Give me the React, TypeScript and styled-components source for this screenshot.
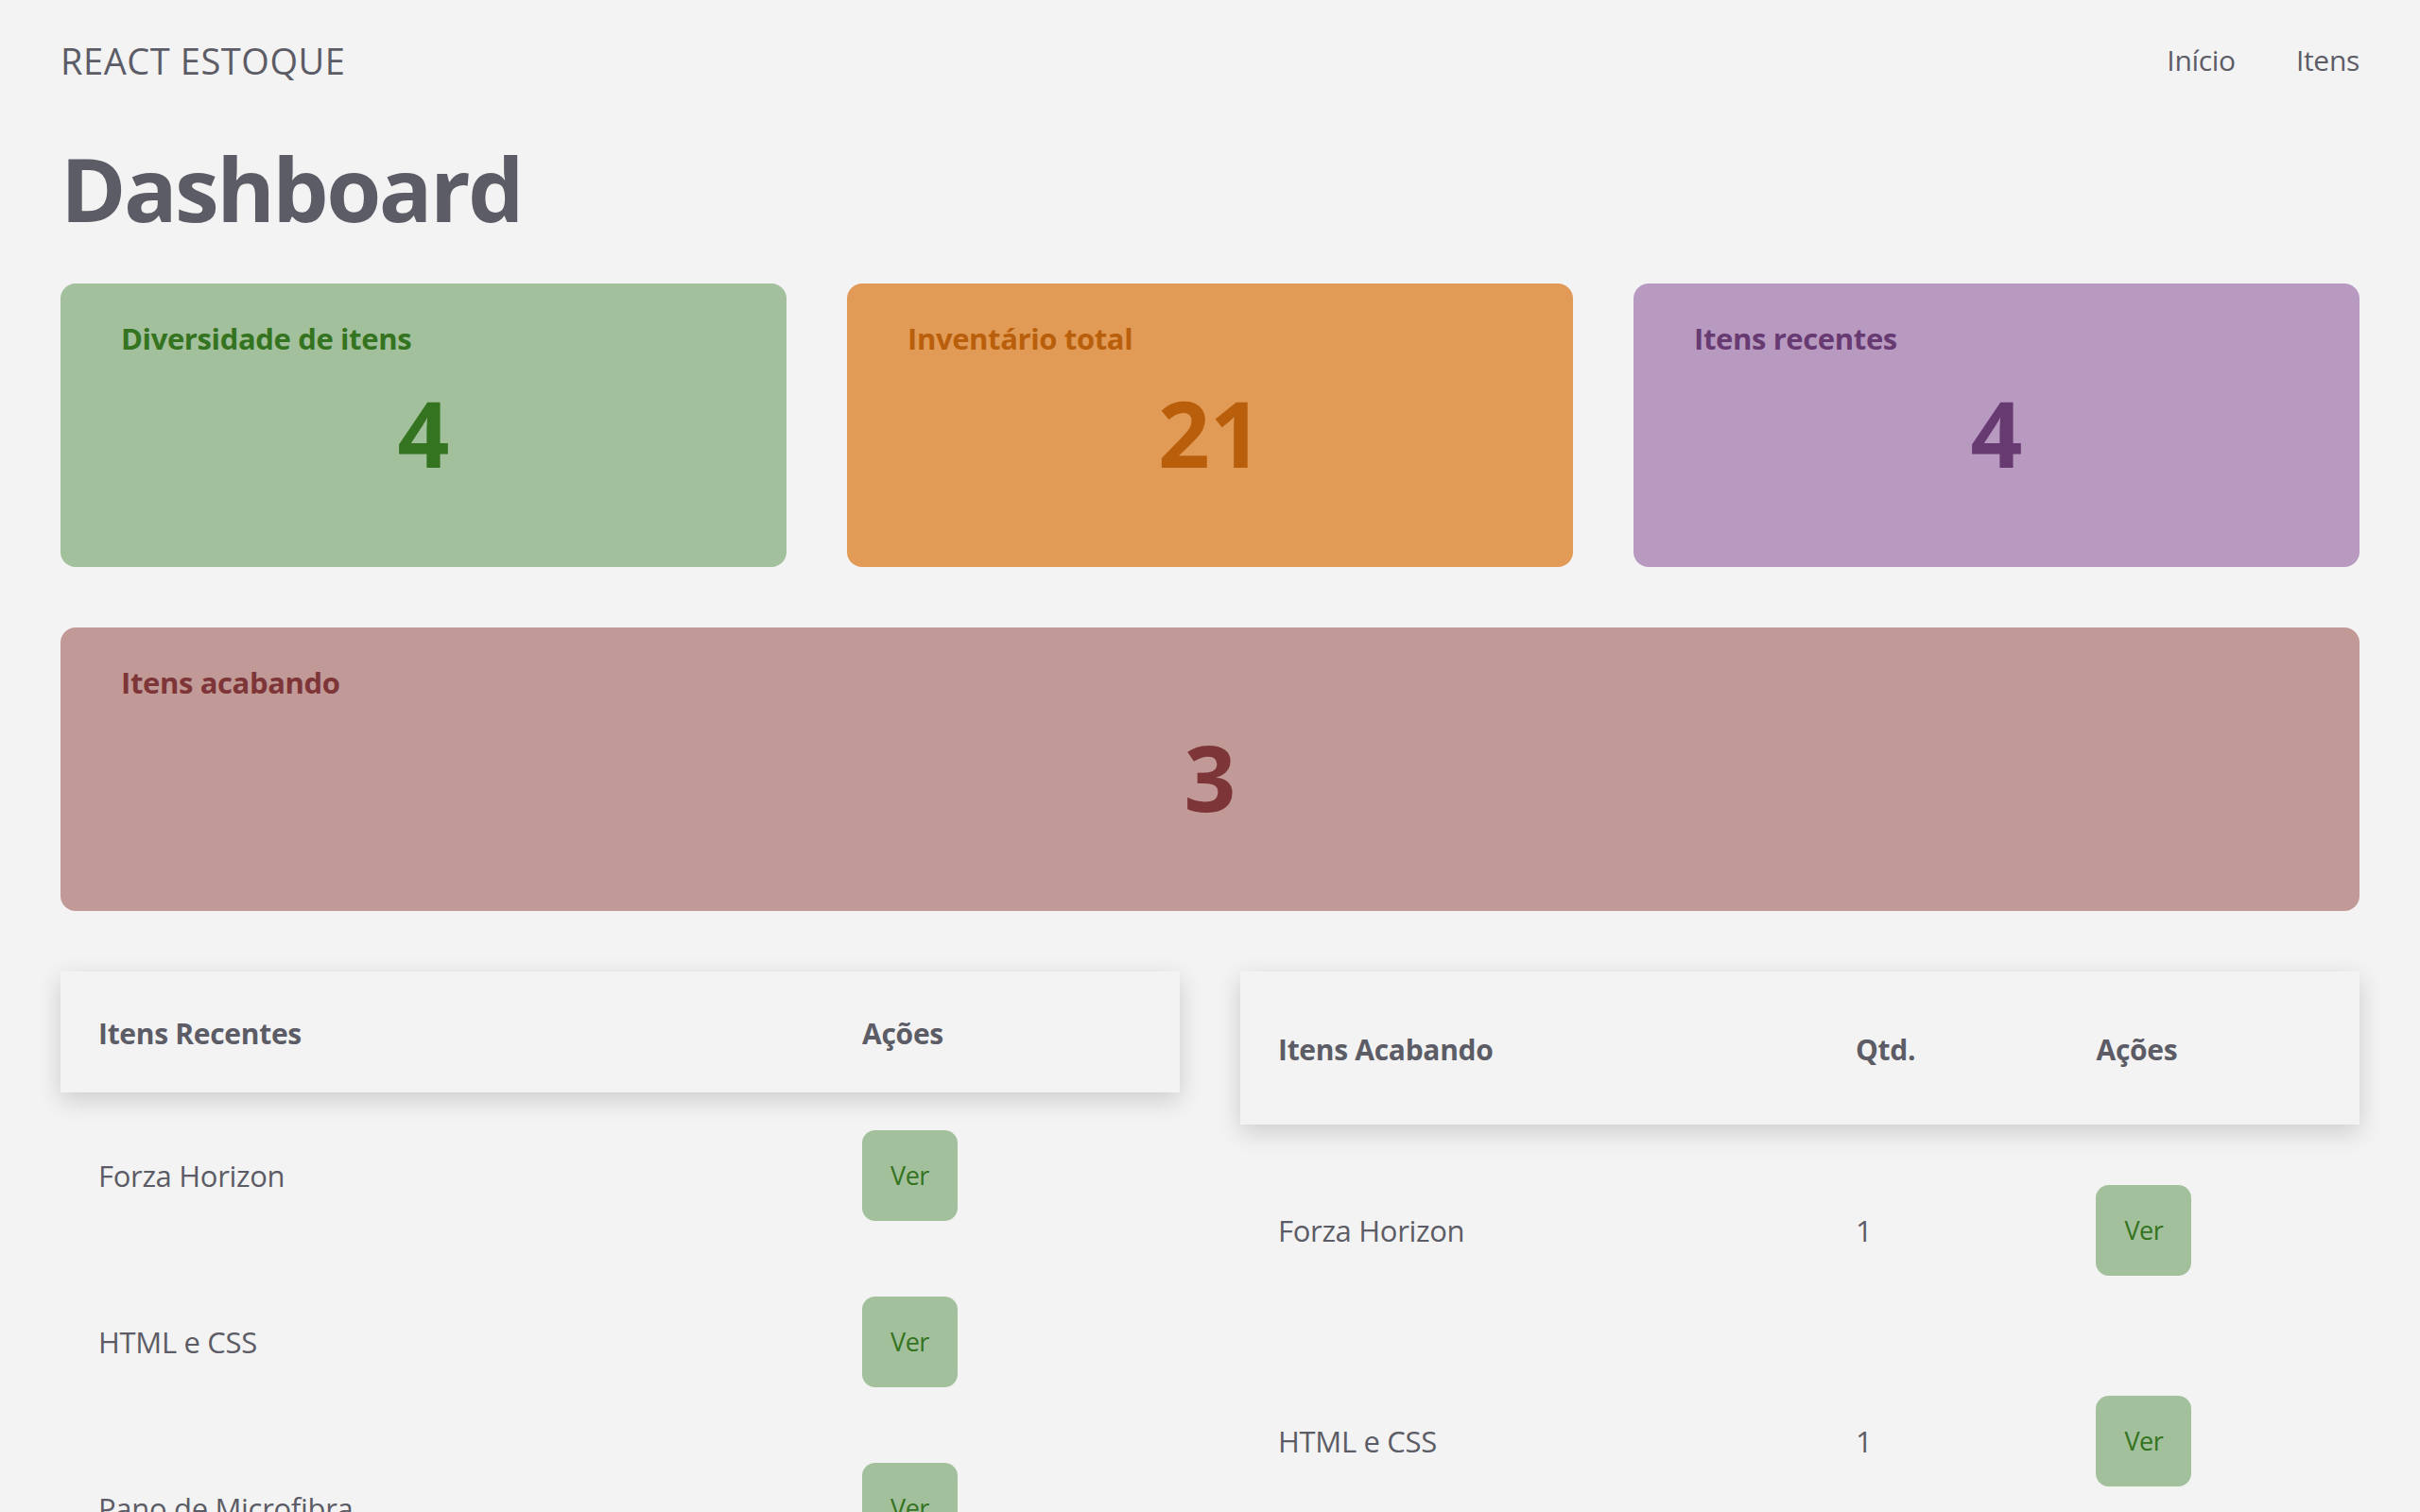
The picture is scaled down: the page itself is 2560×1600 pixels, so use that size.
import React from "react";
import styled, { createGlobalStyle } from "styled-components";

const GlobalStyle = createGlobalStyle`
  html, body {
    margin: 0;
    padding: 0;
    background: #f3f3f3;
  }
  body {
    font-family: "Open Sans", "Noto Sans", "Liberation Sans", sans-serif;
    color: #5c5c66;
  }
  * { box-sizing: border-box; }
`;

type Tone = "green" | "orange" | "purple" | "red";

const tones: Record<Tone, { bg: string; fg: string }> = {
  green: { bg: "#a2c09b", fg: "#347320" },
  orange: { bg: "#e19b56", fg: "#b95f0c" },
  purple: { bg: "#b89ac1", fg: "#683a72" },
  red: { bg: "#c19a98", fg: "#7d3537" },
};

const Page = styled.div`
  padding: 0 64px;
`;

const NavBar = styled.header`
  height: 128px;
  display: flex;
  align-items: center;
  justify-content: space-between;
`;

const Brand = styled.div`
  font-size: 38px;
  line-height: 1;
  letter-spacing: 0.015em;
  text-transform: uppercase;
`;

const NavLinks = styled.nav`
  display: flex;
  gap: 64px;
`;

const NavLink = styled.a`
  font-size: 30px;
  line-height: 1;
  color: #5c5c66;
  text-decoration: none;
  letter-spacing: -0.01em;
`;

const Title = styled.h1`
  margin: 23px 0 53px;
  font-size: 94px;
  line-height: 96px;
  font-weight: 700;
  letter-spacing: -0.028em;
`;

const CardGrid = styled.section`
  display: grid;
  grid-template-columns: repeat(3, 1fr);
  gap: 64px;
  margin-bottom: 64px;
`;

const Card = styled.div<{ $tone: Tone; $wide?: boolean }>`
  grid-column: ${(p) => (p.$wide ? "1 / -1" : "auto")};
  height: 300px;
  padding: 42px 64px 0;
  border-radius: 16px;
  background: ${(p) => tones[p.$tone].bg};
  color: ${(p) => tones[p.$tone].fg};
  display: flex;
  flex-direction: column;
`;

const CardTitle = styled.h2`
  margin: 0;
  font-size: 31px;
  line-height: 32px;
  font-weight: 700;
  letter-spacing: -0.012em;
`;

const CardValue = styled.p`
  margin: 36px 0 0;
  font-size: 96px;
  line-height: 96px;
  font-weight: 700;
  text-align: center;
`;

const TableGrid = styled.section`
  display: grid;
  grid-template-columns: 1fr 1fr;
  gap: 64px;
  align-items: stretch;
`;

const TableWrap = styled.div`
  display: flex;
  flex-direction: column;
`;

const Table = styled.table`
  width: 100%;
  height: 100%;
  flex: 1;
  border-collapse: collapse;
  table-layout: fixed;
`;

const HeadRow = styled.tr`
  background: #f3f3f3;
  box-shadow: 0 8px 24px rgba(0, 0, 0, 0.16);
`;

const Th = styled.th`
  padding: 42px 40px 38px;
  text-align: left;
  font-size: 30px;
  line-height: 48px;
  font-weight: 700;
  letter-spacing: -0.01em;
  color: #5c5c66;
  vertical-align: middle;
`;

const Td = styled.td`
  padding: 40px;
  font-size: 31px;
  line-height: 48px;
  letter-spacing: -0.01em;
  color: #5c5c66;
  vertical-align: middle;
`;

const ViewButton = styled.button`
  height: 96px;
  padding: 0 30px;
  border: none;
  border-radius: 14px;
  background: #a2c09b;
  color: #347320;
  font-family: inherit;
  font-size: 27px;
  line-height: 96px;
  letter-spacing: -0.02em;
  cursor: pointer;
`;

const recentes = ["Forza Horizon", "HTML e CSS", "Pano de Microfibra", "Teclado Mecânico"];
const acabando = [
  { nome: "Forza Horizon", qtd: 1 },
  { nome: "HTML e CSS", qtd: 1 },
  { nome: "Pano de Microfibra", qtd: 2 },
];

export default function App() {
  return (
    <>
      <GlobalStyle />
      <Page>
        <NavBar>
          <Brand>React Estoque</Brand>
          <NavLinks>
            <NavLink href="#">Início</NavLink>
            <NavLink href="#">Itens</NavLink>
          </NavLinks>
        </NavBar>

        <Title>Dashboard</Title>

        <CardGrid>
          <Card $tone="green">
            <CardTitle>Diversidade de itens</CardTitle>
            <CardValue>4</CardValue>
          </Card>
          <Card $tone="orange">
            <CardTitle>Inventário total</CardTitle>
            <CardValue>21</CardValue>
          </Card>
          <Card $tone="purple">
            <CardTitle>Itens recentes</CardTitle>
            <CardValue>4</CardValue>
          </Card>
          <Card $tone="red" $wide>
            <CardTitle>Itens acabando</CardTitle>
            <CardValue>3</CardValue>
          </Card>
        </CardGrid>

        <TableGrid>
          <TableWrap>
            <Table>
              <colgroup>
                <col style={{ width: "68.25%" }} />
                <col />
              </colgroup>
              <tbody>
                <HeadRow>
                  <Th>Itens Recentes</Th>
                  <Th>Ações</Th>
                </HeadRow>
                {recentes.map((nome) => (
                  <tr key={nome}>
                    <Td>{nome}</Td>
                    <Td>
                      <ViewButton>Ver</ViewButton>
                    </Td>
                  </tr>
                ))}
              </tbody>
            </Table>
          </TableWrap>
          <TableWrap>
            <Table>
              <colgroup>
                <col style={{ width: "51.6%" }} />
                <col style={{ width: "21.5%" }} />
                <col />
              </colgroup>
              <tbody>
                <HeadRow>
                  <Th>Itens Acabando</Th>
                  <Th>Qtd.</Th>
                  <Th>Ações</Th>
                </HeadRow>
                {acabando.map((item) => (
                  <tr key={item.nome}>
                    <Td>{item.nome}</Td>
                    <Td>{item.qtd}</Td>
                    <Td>
                      <ViewButton>Ver</ViewButton>
                    </Td>
                  </tr>
                ))}
              </tbody>
            </Table>
          </TableWrap>
        </TableGrid>
      </Page>
    </>
  );
}
